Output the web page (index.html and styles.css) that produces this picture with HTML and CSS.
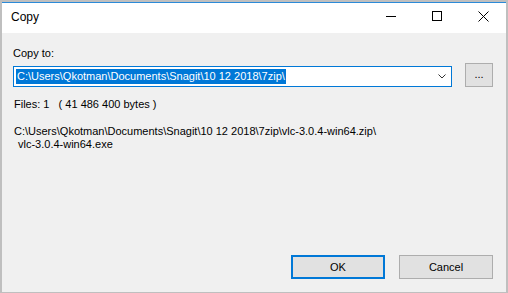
FILE: index.html
```html
<!DOCTYPE html>
<html lang="en">
<head>
    <meta charset="UTF-8">
    <meta name="viewport" content="width=device-width, initial-scale=1.0">
    <title>Copy</title>
    <link rel="stylesheet" href="styles.css">
</head>
<body>

    <div class="window">
        <div class="titlebar">
            <span class="title">Copy</span>
            <div class="controls">
                <span class="ctrl">
                    <svg width="10" height="10" viewBox="0 0 10 10"><path d="M0 5.5H10" stroke="#000" stroke-width="1"/></svg>
                </span>
                <span class="ctrl">
                    <svg width="10" height="10" viewBox="0 0 10 10"><rect x="0.5" y="0.5" width="9" height="9" fill="none" stroke="#000" stroke-width="1"/></svg>
                </span>
                <span class="ctrl">
                    <svg width="11" height="11" viewBox="0 0 11 11"><path d="M0.5 0.5L10.5 10.5M10.5 0.5L0.5 10.5" stroke="#000" stroke-width="1"/></svg>
                </span>
            </div>
        </div>

        <div class="content">
            <label class="label" for="target">Copy to:</label>
            <div class="path-row">
                <div class="combo" id="target">
                    <span class="selected">C:\Users\Qkotman\Documents\Snagit\10 12 2018\7zip\</span>
                    <svg class="chevron" width="8" height="5" viewBox="0 0 8 5"><path d="M0.5 0.5L4 4L7.5 0.5" fill="none" stroke="#333" stroke-width="1"/></svg>
                </div>
                <button class="browse">...</button>
            </div>

            <p class="files">Files: 1   ( 41 486 400 bytes )</p>
            <p class="source">C:\Users\Qkotman\Documents\Snagit\10 12 2018\7zip\vlc-3.0.4-win64.zip\<br><span class="indent">vlc-3.0.4-win64.exe</span></p>

            <div class="actions">
                <button class="btn default">OK</button>
                <button class="btn">Cancel</button>
            </div>
        </div>
    </div>

</body>
</html>
```

FILE: styles.css
```css
body {
    margin: 0;
    background-color: #bfbfbf;
    font-family: "Liberation Sans", Arial, sans-serif;
    font-size: 11px;
    color: #000;
    height: 293px;
    overflow: hidden;
}
.window {
    margin: 2px 2px 0 2px;
    height: 289px;
    border-top: 1px solid #2b8ad8;
    display: flex;
    flex-direction: column;
    background: #f0f0f0;
}
.titlebar {
    height: 30px;
    background: white;
    display: flex;
    align-items: center;
    justify-content: space-between;
}
.title {
    font-size: 12px;
    padding-left: 9px;
    padding-bottom: 2px;
}
.controls {
    display: flex;
    height: 100%;
}
.ctrl {
    width: 46px;
    display: flex;
    align-items: center;
    justify-content: center;
    padding-bottom: 4px;
}
.content {
    flex: 1;
    display: flex;
    flex-direction: column;
    padding: 14px 13px 13px 11px;
    line-height: 13px;
}
.label {
    display: block;
}
.path-row {
    display: flex;
    align-items: flex-end;
    gap: 13px;
    margin-top: 3px;
}
.combo {
    flex: 1;
    height: 21px;
    box-sizing: border-box;
    border: 1px solid #0078d7;
    background: white;
    display: flex;
    align-items: center;
    justify-content: space-between;
    padding: 0 5px 0 2px;
}
.selected {
    background: #0078d7;
    color: white;
    line-height: 15px;
    height: 15px;
    padding: 0 1px;
}
.chevron {
    display: block;
}
.browse {
    width: 28px;
    height: 24px;
    box-sizing: border-box;
    border: 1px solid #adadad;
    background: #e1e1e1;
    font-family: inherit;
    font-size: 11px;
    padding: 0 0 2px 0;
    margin: 0;
    color: #000;
}
.files {
    margin: 11px 0 0 1px;
    white-space: pre;
}
.source {
    margin: 14px 0 0 1px;
}
.indent {
    padding-left: 4px;
}
.actions {
    margin-top: auto;
    display: flex;
    justify-content: flex-end;
    gap: 14px;
}
.btn {
    width: 94px;
    height: 24px;
    box-sizing: border-box;
    border: 1px solid #adadad;
    background: #e1e1e1;
    font-family: inherit;
    font-size: 11px;
    color: #000;
    margin: 0;
    padding: 0;
}
.btn.default {
    border: 2px solid #0078d7;
}
```
